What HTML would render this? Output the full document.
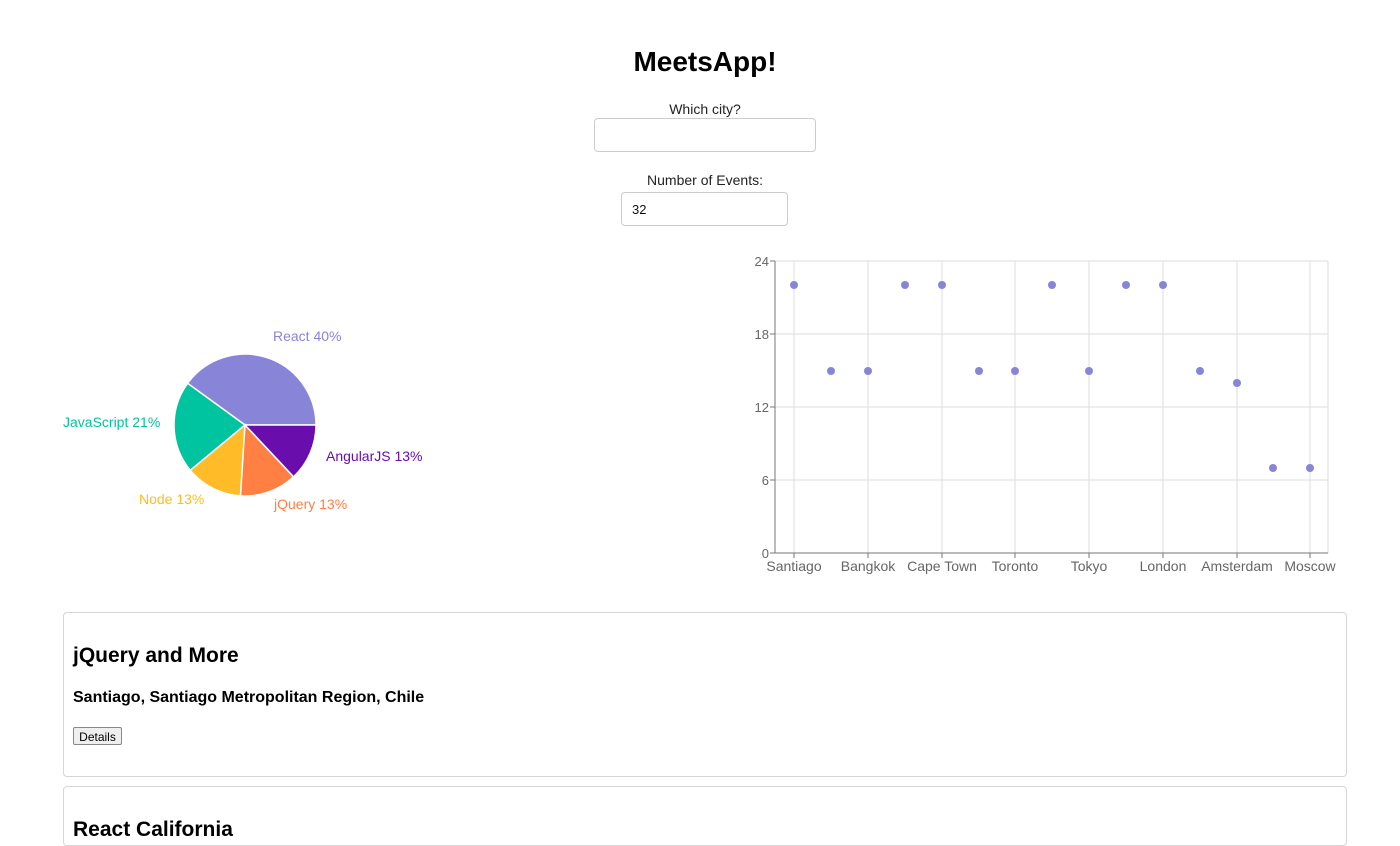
<!DOCTYPE html>
<html><head><meta charset="utf-8"><style>
body{margin:0;width:1400px;height:825px;overflow:hidden;background:#fff;font-family:"Liberation Sans",sans-serif;position:relative}
.a{position:absolute}
.inp{position:absolute;border:1px solid #ccc;border-radius:4px;background:#fff;box-sizing:border-box}
.card{position:absolute;left:63px;width:1284px;border:1px solid #d6d6d6;border-radius:4px;box-sizing:border-box}
</style></head><body>
<div class="a" style="left:0;width:1410px;top:46px;text-align:center;font-size:28px;font-weight:bold;color:#000">MeetsApp!</div>
<div class="a" style="left:0;width:1410px;top:101px;text-align:center;font-size:14px;color:#222">Which city?</div>
<div class="inp" style="left:594px;top:118px;width:222px;height:34px"></div>
<div class="a" style="left:0;width:1410px;top:172px;text-align:center;font-size:14px;color:#222">Number of Events:</div>
<div class="inp" style="left:621px;top:192px;width:167px;height:34px"><span style="position:absolute;left:10px;top:9px;font-size:13px;color:#111">32</span></div>

<svg class="a" style="left:0;top:0" width="1400" height="600" font-family="Liberation Sans, sans-serif" font-size="14">
<g stroke="#fff" stroke-width="1.5">
<path d="M245 425 L316 425 A71 71 0 0 0 187.6 383.3 Z" fill="#8884d8"/>
<path d="M245 425 L187.6 383.3 A71 71 0 0 0 190.3 470.3 Z" fill="#00c49f"/>
<path d="M245 425 L190.3 470.3 A71 71 0 0 0 240.5 495.9 Z" fill="#ffbb28"/>
<path d="M245 425 L240.5 495.9 A71 71 0 0 0 293.6 476.8 Z" fill="#ff8042"/>
<path d="M245 425 L293.6 476.8 A71 71 0 0 0 316 425 Z" fill="#6a0dad"/>
</g>
<text x="273" y="341" fill="#8884d8">React 40%</text>
<text x="63" y="427" fill="#00c49f">JavaScript 21%</text>
<text x="139" y="504" fill="#ffbb28">Node 13%</text>
<text x="274" y="509" fill="#ff8042">jQuery 13%</text>
<text x="326" y="461" fill="#6a0dad">AngularJS 13%</text>

<g stroke="#ddd" stroke-width="1">
<line x1="775" y1="261" x2="1328" y2="261"/>
<line x1="775" y1="334" x2="1328" y2="334"/>
<line x1="775" y1="407" x2="1328" y2="407"/>
<line x1="775" y1="480" x2="1328" y2="480"/>
<line x1="1328" y1="261" x2="1328" y2="553"/>
<line x1="794" y1="261" x2="794" y2="553"/>
<line x1="868" y1="261" x2="868" y2="553"/>
<line x1="942" y1="261" x2="942" y2="553"/>
<line x1="1015" y1="261" x2="1015" y2="553"/>
<line x1="1089" y1="261" x2="1089" y2="553"/>
<line x1="1163" y1="261" x2="1163" y2="553"/>
<line x1="1237" y1="261" x2="1237" y2="553"/>
<line x1="1310" y1="261" x2="1310" y2="553"/>
</g>
<g stroke="#777" stroke-width="1">
<line x1="775" y1="261" x2="775" y2="553"/>
<line x1="775" y1="553" x2="1328" y2="553"/>
<line x1="770" y1="261" x2="775" y2="261"/><line x1="770" y1="334" x2="775" y2="334"/><line x1="770" y1="407" x2="775" y2="407"/><line x1="770" y1="480" x2="775" y2="480"/><line x1="770" y1="553" x2="775" y2="553"/>
<line x1="794" y1="553" x2="794" y2="558"/><line x1="868" y1="553" x2="868" y2="558"/><line x1="942" y1="553" x2="942" y2="558"/><line x1="1015" y1="553" x2="1015" y2="558"/><line x1="1089" y1="553" x2="1089" y2="558"/><line x1="1163" y1="553" x2="1163" y2="558"/><line x1="1237" y1="553" x2="1237" y2="558"/><line x1="1310" y1="553" x2="1310" y2="558"/>
</g>
<g fill="#666" font-size="13" text-anchor="end">
<text x="769" y="266">24</text><text x="769" y="339">18</text><text x="769" y="412">12</text><text x="769" y="485">6</text><text x="769" y="558">0</text>
</g>
<g fill="#666" font-size="14" text-anchor="middle">
<text x="794" y="571">Santiago</text><text x="868" y="571">Bangkok</text><text x="942" y="571">Cape Town</text><text x="1015" y="571">Toronto</text><text x="1089" y="571">Tokyo</text><text x="1163" y="571">London</text><text x="1237" y="571">Amsterdam</text><text x="1310" y="571">Moscow</text>
</g>
<g fill="#8884d8">
<circle cx="794" cy="285" r="4"/><circle cx="831" cy="371" r="4"/><circle cx="868" cy="371" r="4"/><circle cx="905" cy="285" r="4"/><circle cx="942" cy="285" r="4"/><circle cx="979" cy="371" r="4"/><circle cx="1015" cy="371" r="4"/><circle cx="1052" cy="285" r="4"/><circle cx="1089" cy="371" r="4"/><circle cx="1126" cy="285" r="4"/><circle cx="1163" cy="285" r="4"/><circle cx="1200" cy="371" r="4"/><circle cx="1237" cy="383" r="4"/><circle cx="1273" cy="468" r="4"/><circle cx="1310" cy="468" r="4"/>
</g>
</svg>

<div class="card" style="top:612px;height:165px">
<div class="a" style="left:9px;top:31px;font-size:21px;font-weight:bold">jQuery and More</div>
<div class="a" style="left:9px;top:76px;font-size:16px;font-weight:bold">Santiago, Santiago Metropolitan Region, Chile</div>
<div class="a" style="left:9px;top:114px;width:49px;height:18px;border:1px solid #888;border-radius:2px;background:#efefef;font-size:12px;line-height:18px;text-align:center;box-sizing:border-box">Details</div>
</div>
<div class="card" style="top:786px;height:60px">
<div class="a" style="left:9px;top:31px;font-size:21px;font-weight:bold">React California</div>
</div>
</body></html>
